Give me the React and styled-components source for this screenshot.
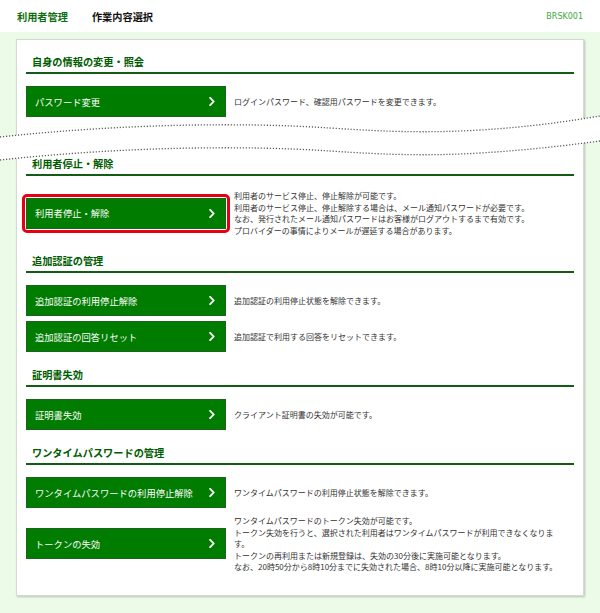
import React from "react";
import styled, { createGlobalStyle } from "styled-components";

const GlobalStyle = createGlobalStyle`
  html, body {
    margin: 0;
    padding: 0;
    background: #ecfbe8;
    font-family: "Noto Sans CJK JP", "Noto Sans", sans-serif;
  }
`;

const sections = [
  {
    title: "自身の情報の変更・照会",
    items: [
      {
        label: "パスワード変更",
        desc: ["ログインパスワード、確認用パスワードを変更できます。"],
      },
    ],
    tearAfter: true,
  },
  {
    title: "利用者停止・解除",
    items: [
      {
        label: "利用者停止・解除",
        highlight: true,
        desc: [
          "利用者のサービス停止、停止解除が可能です。",
          "利用者のサービス停止、停止解除する場合は、メール通知パスワードが必要です。",
          "なお、発行されたメール通知パスワードはお客様がログアウトするまで有効です。",
          "プロバイダーの事情によりメールが遅延する場合があります。",
        ],
      },
    ],
  },
  {
    title: "追加認証の管理",
    items: [
      {
        label: "追加認証の利用停止解除",
        desc: ["追加認証の利用停止状態を解除できます。"],
      },
      {
        label: "追加認証の回答リセット",
        desc: ["追加認証で利用する回答をリセットできます。"],
      },
    ],
  },
  {
    title: "証明書失効",
    items: [
      {
        label: "証明書失効",
        desc: ["クライアント証明書の失効が可能です。"],
      },
    ],
  },
  {
    title: "ワンタイムパスワードの管理",
    items: [
      {
        label: "ワンタイムパスワードの利用停止解除",
        desc: ["ワンタイムパスワードの利用停止状態を解除できます。"],
      },
      {
        label: "トークンの失効",
        desc: [
          "ワンタイムパスワードのトークン失効が可能です。",
          "トークン失効を行うと、選択された利用者はワンタイムパスワードが利用できなくなりま",
          "す。",
          "トークンの再利用または新規登録は、失効の30分後に実施可能となります。",
          "なお、20時50分から8時10分までに失効された場合、8時10分以降に実施可能となります。",
        ],
      },
    ],
  },
];

const Chevron = () => (
  <svg width="6" height="9" viewBox="0 0 6 9">
    <path
      d="M1.2 0.9 L4.6 4.5 L1.2 8.1"
      fill="none"
      stroke="#fff"
      strokeWidth="1.8"
      strokeLinecap="square"
    />
  </svg>
);

const line1 =
  "M0 27 C120 14 240 12 330 18 C390 22 430 23 480 20 C530 17 570 11 600 6";
const line2 =
  "M0 50 C120 37 240 35 330 41 C390 45 430 46 480 43 C530 40 570 35 600 31";
const band =
  "M0 27 C120 14 240 12 330 18 C390 22 430 23 480 20 C530 17 570 11 600 6 " +
  "L600 31 C570 35 530 40 480 43 C430 46 390 45 330 41 C240 35 120 37 0 50 Z";

const TearLine = () => (
  <TearSvg width="600" height="60" viewBox="0 0 600 60">
    <path d={band} fill="#fff" />
    <path d={line1} fill="none" stroke="#5a5a5a" strokeWidth="1.3" strokeDasharray="1.2 1.8" />
    <path d={line2} fill="none" stroke="#5a5a5a" strokeWidth="1.3" strokeDasharray="1.2 1.8" />
  </TearSvg>
);

const App = () => {
  return (
    <>
      <GlobalStyle />
      <Header>
        <HeaderTitle>利用者管理</HeaderTitle>
        <HeaderSub>作業内容選択</HeaderSub>
        <ScreenId>BRSK001</ScreenId>
      </Header>
      <Page>
        <Card>
          {sections.map((section) => (
            <React.Fragment key={section.title}>
              <SectionTitle>{section.title}</SectionTitle>
              <Rows>
                {section.items.map((item) => {
                  const button = (
                    <MenuButton>
                      <span>{item.label}</span>
                      <Chevron />
                    </MenuButton>
                  );
                  return (
                    <Row key={item.label}>
                      {item.highlight ? <Highlight>{button}</Highlight> : button}
                      <Desc>
                        {item.desc.map((line, i) => (
                          <div key={i}>{line}</div>
                        ))}
                      </Desc>
                    </Row>
                  );
                })}
              </Rows>
              {section.tearAfter && (
                <Tear>
                  <TearLine />
                </Tear>
              )}
            </React.Fragment>
          ))}
        </Card>
      </Page>
    </>
  );
};

export default App;

const Header = styled.header`
  height: 32px;
  background: #fff;
  display: flex;
  align-items: center;
  padding: 0 17px;
  box-sizing: border-box;
`;

const HeaderTitle = styled.h1`
  margin: 0;
  font-size: 10.2px;
  font-weight: bold;
  color: #0d6e0d;
`;

const HeaderSub = styled.div`
  margin-left: 24px;
  font-size: 10.2px;
  font-weight: bold;
  color: #111;
`;

const ScreenId = styled.div`
  margin-left: auto;
  font-family: "DejaVu Sans", sans-serif;
  font-size: 8px;
  color: #3da83d;
`;

const Page = styled.main`
  padding: 7px 16px 23px;
`;

const Card = styled.section`
  background: #fff;
  border: 1px solid #d2dad2;
  box-shadow: 1px 1px 2px rgba(0, 0, 0, 0.22);
  padding: 15px 9px 20px;
`;

const SectionTitle = styled.h2`
  margin: 16px 0 0;
  padding: 0 0 3px 6px;
  font-size: 10.2px;
  line-height: 14px;
  font-weight: bold;
  color: #005c00;
  border-bottom: 2px solid #135c13;

  &:first-child {
    margin-top: 0;
  }
`;

const Rows = styled.div`
  display: flex;
  flex-direction: column;
  gap: 5px;
  margin-top: 12px;
`;

const Row = styled.div`
  display: flex;
  align-items: center;
  gap: 8px;
`;

const MenuButton = styled.button`
  flex: none;
  width: 200px;
  height: 31px;
  box-sizing: border-box;
  display: flex;
  align-items: center;
  justify-content: space-between;
  padding: 0 10px 0 8px;
  background: #007c00;
  border: 1px solid #1b641b;
  color: #fff;
  font-family: inherit;
  font-size: 9.3px;
  cursor: pointer;
`;

const Highlight = styled.span`
  display: flex;
  flex: none;
  margin: -4px;
  padding: 1px;
  border: 3px solid #e60012;
  border-radius: 5px;
`;

const Desc = styled.div`
  padding: 2px 0;
  font-size: 8px;
  line-height: 11.5px;
  color: #333;
  white-space: nowrap;
`;

const Tear = styled.div`
  position: relative;
  height: 24px;
`;

const TearSvg = styled.svg`
  position: absolute;
  top: -7px;
  left: -26px;
  display: block;
`;
